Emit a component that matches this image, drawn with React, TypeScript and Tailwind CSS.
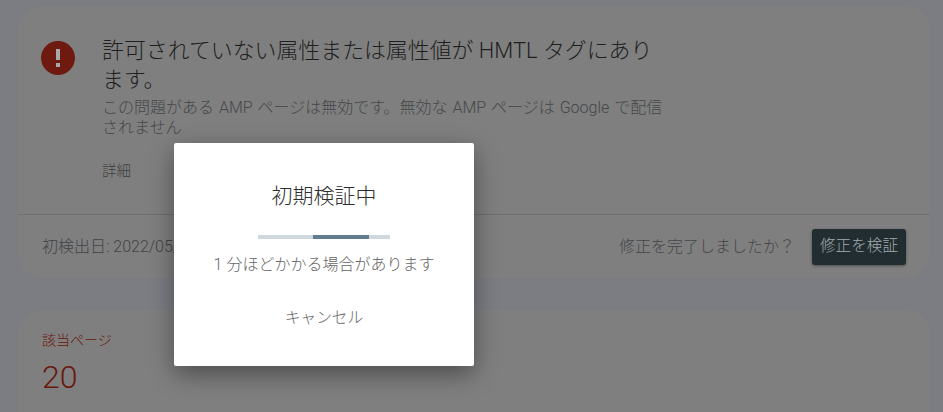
export default function App() {
  const font = { fontFamily: 'Roboto, "Noto Sans CJK JP", sans-serif' };
  return (
    <div style={font} className="relative w-[943px] h-[412px] overflow-hidden bg-[#7c7d83] px-[18px] pt-[6px] font-light">
      <section className="w-[912px] h-[272px] rounded-[24px] bg-[#7f7f7f] flex flex-col">
        <div className="h-[208px] flex border-b border-[#6f6f6f] box-content">
          <div className="pl-[23px] pt-[35px]">
            <svg width="34" height="34" viewBox="0 0 34 34">
              <circle cx="17" cy="17" r="17" fill="#6e1a10" />
              <rect x="15" y="8" width="4" height="11" fill="#a8a8a8" />
              <rect x="15" y="22" width="4" height="4" fill="#a8a8a8" />
            </svg>
          </div>
          <div className="pl-[27px] pt-[30px] w-[590px]">
            <h1 className="text-[21.9px] leading-[29px] text-[#1f1f1f] font-light">許可されていない属性または属性値が HMTL タグにあります。</h1>
            <p className="text-[16px] leading-[20px] text-[#45484b] mt-[4px] [word-spacing:1px]">この問題がある AMP ページは無効です。無効な AMP ページは Google で配信されません</p>
            <div className="text-[14.5px] leading-[20px] text-[#404040] mt-[24px]">詳細</div>
          </div>
        </div>
        <div className="flex-1 flex items-center justify-between pl-[24px] pr-[24px]">
          <span className="text-[16px] text-[#404346] whitespace-nowrap">初検出日: 2022/05/19</span>
          <div className="flex items-center gap-[17px]">
            <span className="text-[16px] text-[#434649]">修正を完了しましたか？</span>
            <button className="w-[94px] h-[36px] rounded-[3px] bg-[#222d32] text-[#a3aaad] text-[15.6px] shadow-[0_1px_3px_rgba(0,0,0,0.4)]">修正を検証</button>
          </div>
        </div>
      </section>
      <section className="w-[912px] h-[200px] mt-[32px] rounded-[24px] bg-[#7f7f7f] pl-[24px] pt-[20px]">
        <div className="text-[14px] leading-[20px] text-[#6a170d]">該当ページ</div>
        <div className="text-[32px] leading-[40px] text-[#6a170d] mt-[7px]">20</div>
      </section>

      <div className="absolute left-[174px] top-[143px] w-[300px] h-[223px] bg-white rounded-[2px] shadow-[0_8px_24px_rgba(0,0,0,0.4)] flex flex-col items-center">
        <h2 className="text-[21px] leading-[28px] text-[#2e2e2e] font-light mt-[39px]">初期検証中</h2>
        <div className="relative w-[132px] h-[4px] bg-[#cfd8dc] mt-[25px]">
          <div className="absolute left-[55px] w-[56px] h-[4px] bg-[#607d8b]" />
        </div>
        <p className="text-[16px] leading-[20px] text-[#666666] mt-[16px]">1 分ほどかかる場合があります</p>
        <button className="text-[15.6px] leading-[20px] text-[#666666] mt-[33px]">キャンセル</button>
      </div>
    </div>
  );
}
